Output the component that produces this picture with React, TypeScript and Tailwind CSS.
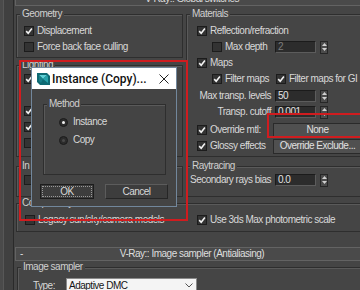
import React from "react";

const Check = ({ checked }: { checked?: boolean }) => (
  <span className="w-[10px] h-[10px] shrink-0 border border-[#1c1c1c] bg-[#333333] flex items-center justify-center">
    {checked && (
      <svg width="8" height="8" viewBox="0 0 8 8">
        <path d="M1.2 4.1 L3.2 6.2 L6.9 1.5" fill="none" stroke="#f2f2f2" strokeWidth="1.6" />
      </svg>
    )}
  </span>
);

const Group = ({
  label,
  className = "",
  inner = "",
  children,
}: {
  label: string;
  className?: string;
  inner?: string;
  children?: React.ReactNode;
}) => (
  <fieldset className={"border border-[#2e2e2e] shadow-[inset_1px_1px_0_#5a5a5a] min-w-0 " + className}>
    <legend className="ml-[3px] px-[2px] leading-[12px] text-[#cfcfcf] bg-[#454545] whitespace-nowrap">{label}</legend>
    <div className={inner}>{children}</div>
  </fieldset>
);

const Row = ({ className = "", children }: { className?: string; children?: React.ReactNode }) => (
  <div className={"h-4 flex items-center whitespace-nowrap " + className}>{children}</div>
);

const Field = ({ value, dim }: { value: string; dim?: boolean }) => (
  <span
    className={
      "w-[41px] h-[12px] shrink-0 bg-[#2c2c2c] border border-t-[#1b1b1b] border-l-[#1b1b1b] border-b-[#5c5c5c] border-r-[#5c5c5c] pl-[2px] leading-[10px] " +
      (dim ? "text-[#7c7c7c]" : "text-[#e2e2e2]")
    }
  >
    {value}
  </span>
);

const Spinner = () => (
  <span className="ml-[4px] w-[8px] h-[13px] shrink-0 border border-[#262626] bg-[#4b4b4b] flex flex-col items-center justify-center gap-[2px]">
    <svg width="5" height="3" viewBox="0 0 5 3">
      <path d="M0 3 L2.5 0 L5 3Z" fill="#d0d0d0" />
    </svg>
    <svg width="5" height="3" viewBox="0 0 5 3">
      <path d="M0 0 L2.5 3 L5 0Z" fill="#d0d0d0" />
    </svg>
  </span>
);

const Btn = ({ label }: { label: string }) => (
  <span className="w-[89px] h-[15px] shrink-0 bg-[#505050] border border-[#2a2a2a] flex items-center justify-center text-[#e0e0e0] overflow-hidden">
    {label}
  </span>
);

const Header = ({ title, className = "" }: { title: string; className?: string }) => (
  <div className={"relative ml-[1px] w-[354px] h-[14px] shrink-0 bg-[#4a4a4a] border border-[#636363] flex items-center justify-center text-[#dedede] " + className}>
    <span className="absolute left-[4px]">-</span>
    <span>{title}</span>
  </div>
);

export default function App() {
  return (
    <div className="relative w-[360px] h-[290px] overflow-hidden bg-[#454545] flex font-['Liberation_Sans',Arial,sans-serif] text-[10px] tracking-[-0.5px] text-[#d8d8d8] leading-[12px]">
      {/* left strip */}
      <div className="w-[14px] h-full shrink-0 flex bg-[#404040] border-r border-[#2a2a2a]">
        <div className="w-[4px] h-full bg-[#4a4a4a] border-r border-[#575757]" />
      </div>

      <div className="w-[356px] shrink-0 flex flex-col">
        <Header title="V-Ray:: Global switches" className="-mt-[8px]" />

        <div className="ml-[2px] w-[352px] mt-[2px] grid grid-cols-[167px_182px] gap-x-[3px]">
          {/* left column */}
          <div className="flex flex-col">
            <Group label="Geometry" inner="pl-[7px] pt-[3px] pb-[2px]">
              <Row className="gap-[3px]">
                <Check checked />
                <span>Displacement</span>
              </Row>
              <Row className="gap-[3px]">
                <Check />
                <span>Force back face culling</span>
              </Row>
            </Group>
            {/* Lighting group: its labels lie under the dialog, only the checkboxes show */}
            <Group label="Lighting" className="mt-[1px]" inner="pl-[7px] pb-[5px]">
              <Row>
                <Check checked />
              </Row>
              <Row />
              <Row>
                <Check checked />
              </Row>
              <Row>
                <Check checked />
              </Row>
              <Row>
                <Check />
              </Row>
            </Group>
          </div>

          {/* right column */}
          <Group label="Materials" inner="pl-[10px] pt-[3px] pb-[2px]">
            <Row className="gap-[3px]">
              <Check checked />
              <span>Reflection/refraction</span>
            </Row>
            <Row>
              <div className="w-[76px] shrink-0 flex items-center gap-[3px] pl-[15px]">
                <Check />
                <span>Max depth</span>
              </div>
              <span className="ml-[2px]" />
              <Field value="2" dim />
              <Spinner />
            </Row>
            <Row className="gap-[3px]">
              <Check checked />
              <span>Maps</span>
            </Row>
            <Row className="pl-[15px]">
              <div className="w-[64px] shrink-0 flex items-center gap-[3px]">
                <Check checked />
                <span>Filter maps</span>
              </div>
              <div className="flex items-center gap-[3px]">
                <Check checked />
                <span>Filter maps for GI</span>
              </div>
            </Row>
            <Row className="mt-[1px]">
              <span className="w-[76px] shrink-0 text-right pr-[2px]">Max transp. levels</span>
              <span className="ml-[2px]" />
              <Field value="50" />
              <Spinner />
            </Row>
            <Row>
              <span className="w-[76px] shrink-0 text-right pr-[2px]">Transp. cutoff</span>
              <span className="ml-[2px]" />
              <Field value="0.001" />
              <Spinner />
            </Row>
            <Row className="mt-[2px]">
              <div className="w-[76px] shrink-0 flex items-center gap-[3px]">
                <Check checked />
                <span>Override mtl:</span>
              </div>
              <Btn label="None" />
            </Row>
            <Row>
              <div className="w-[76px] shrink-0 flex items-center gap-[3px]">
                <Check checked />
                <span>Glossy effects</span>
              </div>
              <Btn label="Override Exclude..." />
            </Row>
          </Group>

          {/* row B */}
          <Group label="In" className="mt-[3px]" inner="pl-[7px] pb-[8px]">
            <Row>
              <Check />
            </Row>
          </Group>
          <Group label="Raytracing" className="mt-[3px]" inner="pl-[3px] pb-[8px]">
            <Row>
              <span className="w-[85px] shrink-0 text-right pr-[4px]">Secondary rays bias</span>
              <Field value="0.0" />
              <Spinner />
            </Row>
          </Group>

          {/* compatibility */}
          <Group label="Compatibility" className="col-span-2" inner="flex pt-[3px] pb-[3px]">
            <Row className="w-[170px] shrink-0 pl-[8px] gap-[3px]">
              <Check />
              <span>Legacy sun/sky/camera models</span>
            </Row>
            <Row className="pl-[10px] gap-[3px]">
              <Check checked />
              <span>Use 3ds Max photometric scale</span>
            </Row>
          </Group>
        </div>

        <Header title="V-Ray:: Image sampler (Antialiasing)" className="mt-[15px]" />

        <Group label="Image sampler" className="ml-[3px] w-[351px]" inner="pt-[5px] pb-[4px]">
          <div className="flex items-center">
            <span className="w-[48px] pl-[15px] shrink-0">Type:</span>
            <div className="w-[131px] h-[15px] bg-[#f4f4f4] border border-[#8a8a8a] flex items-center justify-between pl-[2px] pr-[3px] text-[#141414]">
              <span>Adaptive DMC</span>
              <svg width="8" height="5" viewBox="0 0 8 5">
                <path d="M0.5 0.5 L4 4 L7.5 0.5" fill="none" stroke="#555" strokeWidth="1" />
              </svg>
            </div>
          </div>
        </Group>
      </div>

      {/* dialog */}
      <div className="absolute left-[31px] top-[67px] w-[146px] h-[140px] border border-[#72879c] bg-[#444444] flex flex-col">
        <div className="h-[21px] shrink-0 bg-white flex items-center pl-[4px]">
          <svg width="15" height="14" viewBox="0 0 15 14">
            <polygon points="1,1 11,1 14,4 14,13 4,13 1,10" fill="#0e6a73" />
            <polygon points="3,3 11,3 7,7" fill="#5fd0d6" />
            <polygon points="7,7 11,3 12,5 12,11" fill="#27a2aa" />
            <polygon points="3,3 7,7 5,11 3,9" fill="#17808a" />
          </svg>
          <span className="ml-[1px] font-['Roboto',Arial,sans-serif] font-medium text-[12px] tracking-normal text-[#111] leading-[14px]">
            Instance (Copy)...
          </span>
          <svg className="ml-auto mr-[7px]" width="10" height="10" viewBox="0 0 10 10">
            <path d="M0.5 0.5 L9.5 9.5 M9.5 0.5 L0.5 9.5" stroke="#222" strokeWidth="1" />
          </svg>
        </div>
        <fieldset className="ml-[11px] mt-[9px] w-[123px] border border-[#2e2e2e] shadow-[inset_1px_1px_0_#5a5a5a]">
          <legend className="ml-[3px] px-[2px] leading-[12px] text-[#cfcfcf] bg-[#444444]">Method</legend>
          <div className="pt-[4px] pl-[15px] pb-[26px] flex flex-col gap-[2px]">
            <Row className="gap-[5px]">
              <span className="w-[9px] h-[9px] rounded-full border border-[#1c1c1c] bg-[#2c2c2c] flex items-center justify-center">
                <span className="w-[3px] h-[3px] rounded-full bg-[#f0f0f0]" />
              </span>
              <span>Instance</span>
            </Row>
            <Row className="gap-[5px]">
              <span className="w-[9px] h-[9px] rounded-full border border-[#1c1c1c] bg-[#2c2c2c] flex items-center justify-center">
                <span className="w-[3px] h-[3px] rounded-full bg-[#4a4a4a]" />
              </span>
              <span>Copy</span>
            </Row>
          </div>
        </fieldset>
        <div className="flex mt-[9px] ml-[8px] gap-[11px]">
          <span className="w-[54px] h-[15px] bg-[#3d3d3d] border border-[#1c1c1c] p-[1px] flex">
            <span className="flex-1 border border-dotted border-[#9a9a9a] flex items-center justify-center">OK</span>
          </span>
          <span className="w-[63px] h-[15px] bg-[#3d3d3d] border border-t-[#5c5c5c] border-l-[#5c5c5c] border-b-[#262626] border-r-[#262626] flex items-center justify-center">
            Cancel
          </span>
        </div>
      </div>

      {/* red annotation boxes */}
      <div className="absolute left-[19px] top-[60px] w-[169px] h-[161px] border-2 border-[#d01c1f]" />
      <div className="absolute left-[267px] top-[113px] w-[110px] h-[25px] border-2 border-[#d01c1f]" />
    </div>
  );
}
